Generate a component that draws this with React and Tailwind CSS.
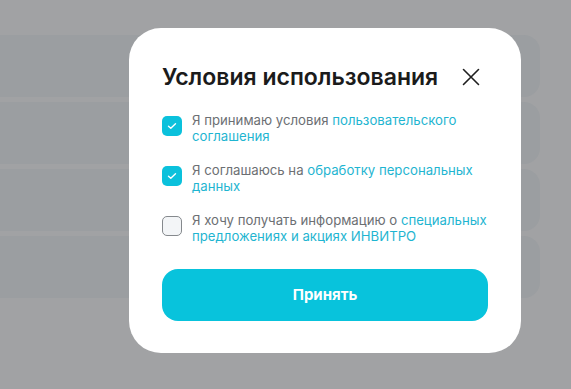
import React, { useState } from "react";

const Check = ({ checked, onChange }) => (
  <button
    type="button"
    onClick={onChange}
    className={
      checked
        ? "mt-[4px] flex h-[20px] w-[20px] shrink-0 items-center justify-center rounded-[5px] bg-[#0bc1dc]"
        : "mt-[4px] flex h-[20px] w-[20px] shrink-0 items-center justify-center rounded-[5px] border border-[#85898d] bg-[#f3f5f7]"
    }
  >
    {checked && (
      <svg width="10" height="8" viewBox="0 0 10 8" fill="none">
        <path d="M1.5 4.2L3.8 6.3L8.5 1.7" stroke="white" strokeWidth="1.4" strokeLinecap="round" strokeLinejoin="round" />
      </svg>
    )}
  </button>
);

const App = () => {
  const [agree, setAgree] = useState({ terms: true, personal: true, promo: false });

  const items = [
    { key: "terms", text: "Я принимаю условия ", link: "пользовательского соглашения" },
    { key: "personal", text: "Я соглашаюсь на ", link: "обработку персональных данных" },
    { key: "promo", text: "Я хочу получать информацию о ", link: "специальных предложениях и акциях ИНВИТРО" },
  ];

  return (
    <div className="relative h-[389px] w-[571px] overflow-hidden bg-[#a1a2a4]" style={{ fontFamily: "Inter, 'Noto Sans', sans-serif" }}>
      {/* page behind the overlay */}
      <div className="flex flex-col gap-[5px] pt-[35px]">
        {[0, 1, 2, 3].map((i) => (
          <div key={i} className="h-[62px] w-[540px] rounded-r-[16px] bg-[#9b9ea1]" />
        ))}
      </div>

      {/* modal */}
      <div className="absolute left-[129px] top-[28px] w-[392px] rounded-[32px] bg-white px-[33px] pb-[32px] pt-[35px]">
        <div className="flex items-center justify-between">
          <h2 className="text-[23px] font-semibold leading-[28px] text-[#1b1b1b]">Условия использования</h2>
          <button type="button" className="mr-[7px] flex h-[20px] w-[20px] items-center justify-center">
            <svg width="18" height="18" viewBox="0 0 18 18" fill="none">
              <path d="M1.5 1.5L16.5 16.5M16.5 1.5L1.5 16.5" stroke="#1f1f1f" strokeWidth="1.6" strokeLinecap="round" />
            </svg>
          </button>
        </div>

        <div className="mt-[21px] flex flex-col gap-[18px]">
          {items.map((it) => (
            <label key={it.key} className="flex gap-[10px]">
              <Check
                checked={agree[it.key]}
                onChange={() => setAgree((a) => ({ ...a, [it.key]: !a[it.key] }))}
              />
              <span className="mr-[-8px] text-[13.2px] leading-[16px] text-[#6c6f73]">
                {it.text}
                <a href="#" className="text-[#1fb5d1]">{it.link}</a>
              </span>
            </label>
          ))}
        </div>

        <button
          type="button"
          className="mt-[25px] flex h-[52px] w-full items-center justify-center rounded-[16px] bg-[#08c3dc] text-[15px] font-bold text-white"
        >
          Принять
        </button>
      </div>
    </div>
  );
};

export default App;
